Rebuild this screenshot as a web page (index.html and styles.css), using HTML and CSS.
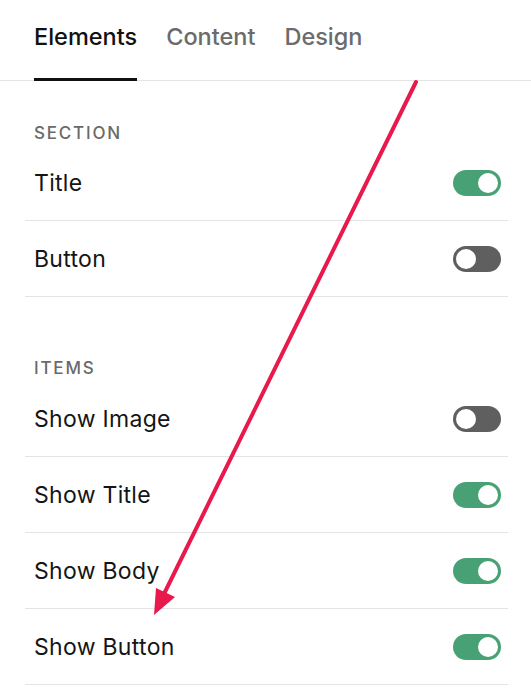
FILE: index.html
```html
<!DOCTYPE html>
<html lang="en">
<head>
    <meta charset="UTF-8">
    <meta name="viewport" content="width=device-width, initial-scale=1.0">
    <title>Elements</title>
    <link rel="stylesheet" href="styles.css">
</head>
<body>
<div class="page">
    <!-- Tabs -->
    <div class="tabs">
        <div class="tab active">Elements</div>
        <div class="tab">Content</div>
        <div class="tab">Design</div>
    </div>

    <div class="panel">
        <!-- Section group -->
        <div class="group first">
            <div class="group-label">SECTION</div>
            <div class="row">
                <span>Title</span>
                <span class="toggle on"></span>
            </div>
            <div class="row">
                <span>Button</span>
                <span class="toggle"></span>
            </div>
        </div>

        <!-- Items group -->
        <div class="group">
            <div class="group-label">ITEMS</div>
            <div class="row">
                <span>Show Image</span>
                <span class="toggle"></span>
            </div>
            <div class="row">
                <span>Show Title</span>
                <span class="toggle on"></span>
            </div>
            <div class="row">
                <span>Show Body</span>
                <span class="toggle on"></span>
            </div>
            <div class="row">
                <span>Show Button</span>
                <span class="toggle on"></span>
            </div>
        </div>
    </div>

    <!-- Annotation arrow -->
    <svg class="arrow" width="531" height="700" viewBox="0 0 531 700">
        <line x1="416" y1="82" x2="161" y2="600" stroke="#e8194b" stroke-width="4" stroke-linecap="round"/>
        <polygon points="154,615 156,588 175,597" fill="#e8194b"/>
    </svg>
</div>
</body>
</html>
```

FILE: styles.css
```css
/* General Reset */
body {
    margin: 0;
    padding: 0;
    background: #ffffff;
    font-family: Inter, "Liberation Sans", sans-serif;
    color: #111;
}

.page {
    position: relative;
    width: 531px;
    height: 700px;
    overflow: hidden;
}

/* Tabs */
.tabs {
    display: flex;
    gap: 29px;
    height: 81px;
    box-sizing: border-box;
    padding-left: 34px;
    border-bottom: 1px solid #e4e4e4;
}

.tab {
    font-size: 23.5px;
    font-weight: 500;
    color: #6b6b6b;
    line-height: 26px;
    padding-top: 24px;
    box-sizing: border-box;
    height: 81px;
    margin-bottom: -1px;
    border-bottom: 3px solid transparent;
}

.tab.active {
    color: #111;
    border-bottom-color: #111;
}

/* Panel */
.panel {
    padding: 0 23px 0 25px;
}

.group {
    padding-top: 61px;
}

.group.first {
    padding-top: 42px;
}

.group-label {
    font-size: 17px;
    font-weight: 500;
    letter-spacing: 1.8px;
    color: #6a6a6a;
    line-height: 20px;
    padding-left: 9px;
    margin-bottom: 2px;
}

.group:not(.first) .group-label {
    margin-bottom: 3px;
}

.row {
    display: flex;
    align-items: center;
    justify-content: space-between;
    height: 76px;
    box-sizing: border-box;
    padding: 0 7px 0 9px;
    border-bottom: 1px solid #e4e4e4;
    font-size: 23px;
    letter-spacing: 0.3px;
    color: #151515;
}

/* Toggle switch */
.toggle {
    position: relative;
    width: 48px;
    height: 26px;
    border-radius: 13px;
    background: #5f5f5f;
}

.toggle::after {
    content: "";
    position: absolute;
    top: 3px;
    left: 3px;
    width: 20px;
    height: 20px;
    border-radius: 50%;
    background: #ffffff;
}

.toggle.on {
    background: #47a174;
}

.toggle.on::after {
    left: 25px;
}

/* Arrow overlay */
.arrow {
    position: absolute;
    top: 0;
    left: 0;
    pointer-events: none;
}
```
